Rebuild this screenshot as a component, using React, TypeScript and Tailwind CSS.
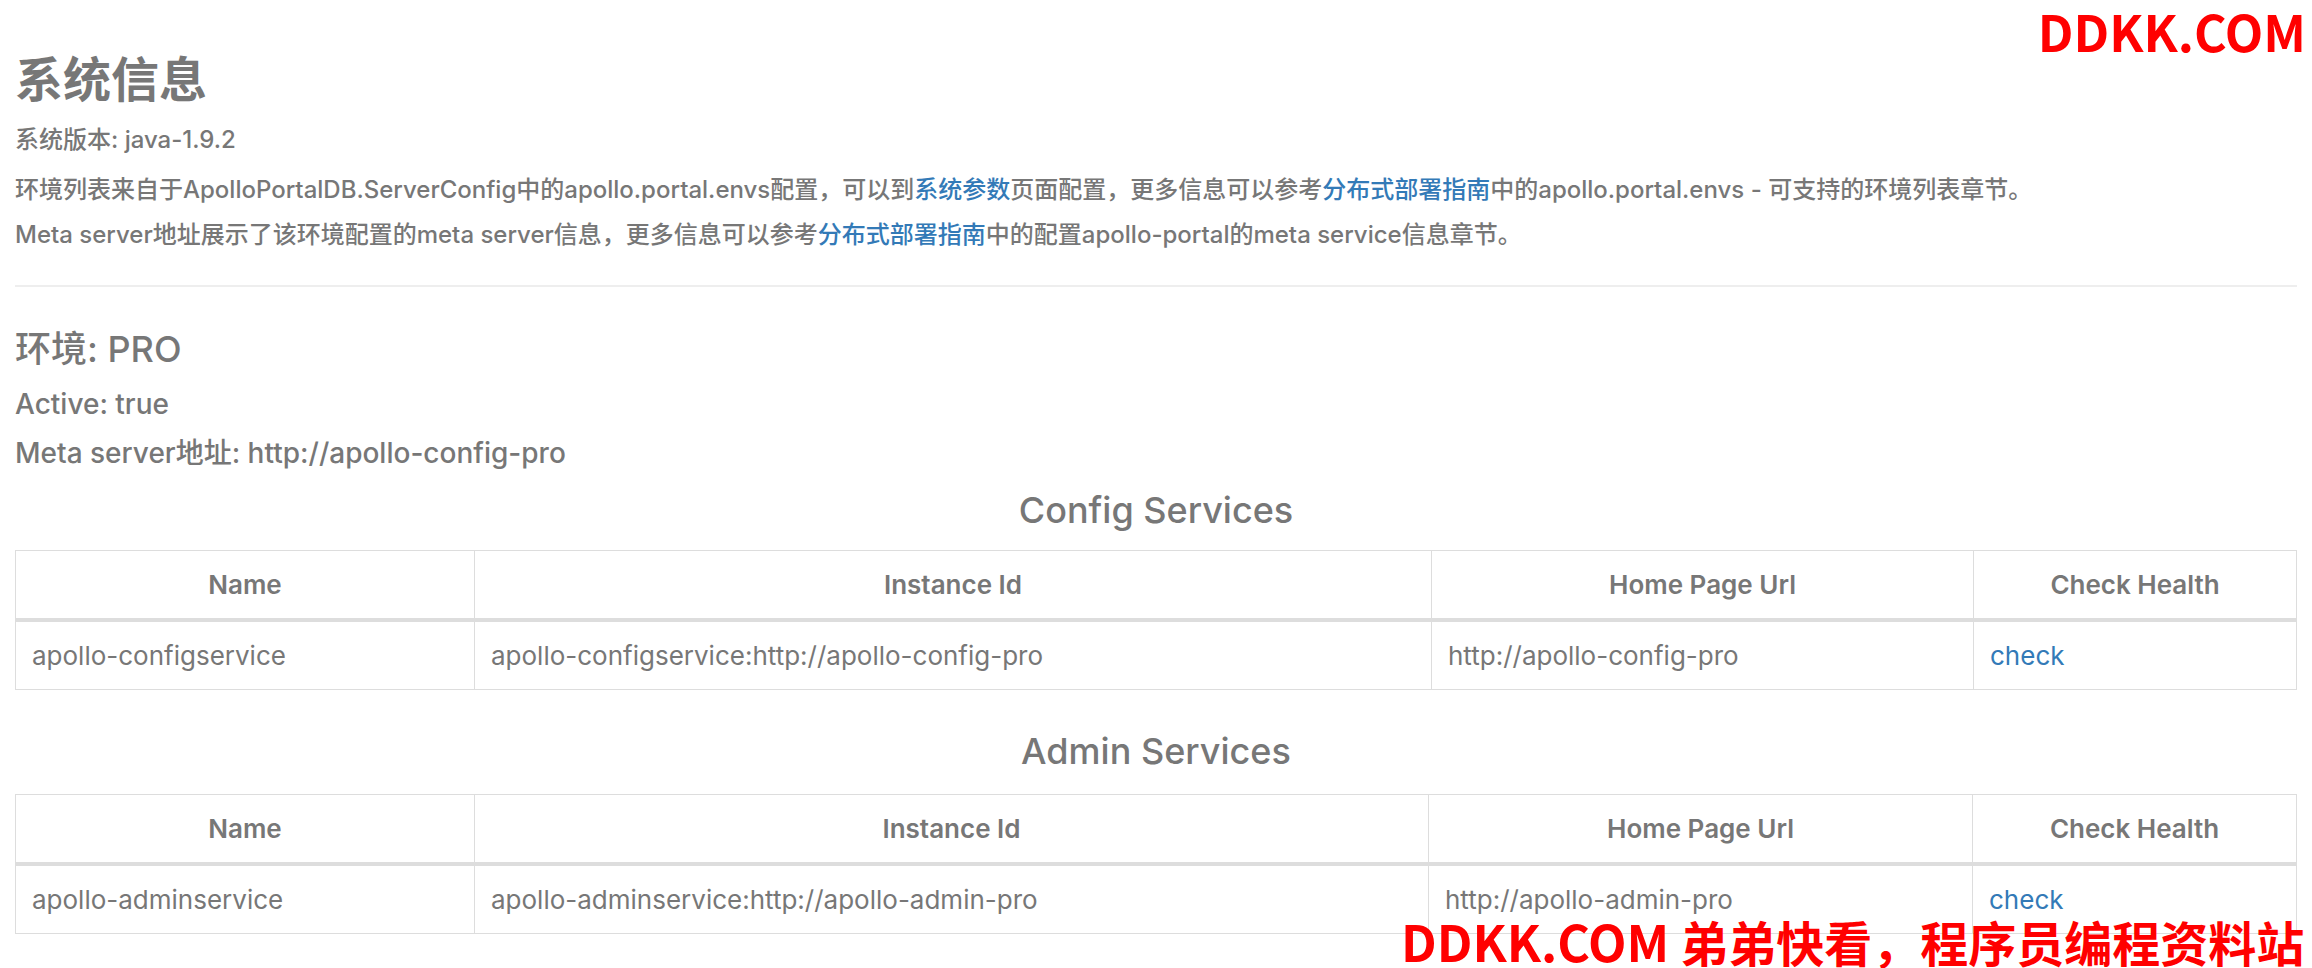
import React from "react";

type Row = {
  name: string;
  instanceId: string;
  homePageUrl: string;
};

const configServices: Row[] = [
  {
    name: "apollo-configservice",
    instanceId: "apollo-configservice:http://apollo-config-pro",
    homePageUrl: "http://apollo-config-pro",
  },
];

const adminServices: Row[] = [
  {
    name: "apollo-adminservice",
    instanceId: "apollo-adminservice:http://apollo-admin-pro",
    homePageUrl: "http://apollo-admin-pro",
  },
];

const ServiceTable = ({
  rows,
  cols,
}: {
  rows: Row[];
  cols: [string, string, string];
}) => {
  return (
    <table className="w-full table-fixed border-collapse border border-[#ddd] text-[26px] leading-[37px] text-[#777]">
      <colgroup>
        <col className={cols[0]} />
        <col className={cols[1]} />
        <col className={cols[2]} />
        <col />
      </colgroup>
      <thead>
        <tr>
          {["Name", "Instance Id", "Home Page Url", "Check Health"].map((h) => (
            <th
              key={h}
              className="border border-b-4 border-[#ddd] px-4 py-[15px] text-center font-semibold"
            >
              {h}
            </th>
          ))}
        </tr>
      </thead>
      <tbody>
        {rows.map((row) => (
          <tr key={row.name}>
            <td className="border border-[#ddd] px-4 py-[15px]">{row.name}</td>
            <td className="border border-[#ddd] px-4 py-[15px]">
              {row.instanceId}
            </td>
            <td className="border border-[#ddd] px-4 py-[15px]">
              {row.homePageUrl}
            </td>
            <td className="border border-[#ddd] px-4 py-[15px]">
              <a className="text-[#337ab7]">check</a>
            </td>
          </tr>
        ))}
      </tbody>
    </table>
  );
};

export default function App() {
  return (
    <div className="relative min-h-[968px] overflow-hidden bg-white font-['Inter','Noto_Sans_CJK_SC',sans-serif] text-[#777]">
      <div className="flex flex-col px-[15px] pt-[52px] pb-10">
        <h1 className="h-[56px] text-[48px] leading-[56px] font-semibold">
          系统信息
        </h1>
        <p className="mt-[18px] h-[28px] text-[24px] leading-[28px] font-medium">
          系统版本: java-1.9.2
        </p>
        <p className="mt-[19px] h-[34px] text-[24px] leading-[34px] font-medium">
          环境列表来自于ApolloPortalDB.ServerConfig中的apollo.portal.envs配置，可以到
          <a className="text-[#337ab7]">系统参数</a>
          页面配置，更多信息可以参考
          <a className="text-[#337ab7]">分布式部署指南</a>
          中的apollo.portal.envs - 可支持的环境列表章节。
        </p>
        <p className="mt-[11px] h-[34px] text-[24px] leading-[34px] font-medium">
          Meta server地址展示了该环境配置的meta server信息，更多信息可以参考
          <a className="text-[#337ab7]">分布式部署指南</a>
          中的配置apollo-portal的meta service信息章节。
        </p>
        <hr className="mt-[33px] border-t-2 border-[#eee]" />

        <h4 className="mt-[42px] h-[40px] text-[36px] leading-[40px] font-medium">
          环境: PRO
        </h4>
        <p className="mt-[17px] h-[36px] text-[28px] leading-[36px] font-medium">
          Active: true
        </p>
        <p className="mt-[13px] h-[36px] text-[28px] leading-[36px] font-medium">
          Meta server地址: http://apollo-config-pro
        </p>

        <h4 className="mt-[19px] h-[40px] text-center text-[36px] leading-[40px] font-medium">
          Config Services
        </h4>
        <div className="mt-[20px]">
          <ServiceTable
            rows={configServices}
            cols={["w-[459px]", "w-[957px]", "w-[542px]"]}
          />
        </div>

        <h4 className="mt-[41px] h-[40px] text-center text-[36px] leading-[40px] font-medium">
          Admin Services
        </h4>
        <div className="mt-[23px]">
          <ServiceTable
            rows={adminServices}
            cols={["w-[459px]", "w-[954px]", "w-[544px]"]}
          />
        </div>
      </div>

      <div className="absolute top-[2px] right-[6px] font-['Noto_Sans_CJK_SC',sans-serif] text-[50px] leading-[56px] font-bold text-[#ff0000]">
        DDKK.COM
      </div>
      <div className="absolute top-[912px] left-[1401px] whitespace-nowrap font-['Noto_Sans_CJK_SC',sans-serif] text-[48px] leading-[56px] font-bold text-[#ff0000]">
        <span className="text-[50px]">DDKK.COM</span> 弟弟快看，程序员编程资料站
      </div>
    </div>
  );
}
